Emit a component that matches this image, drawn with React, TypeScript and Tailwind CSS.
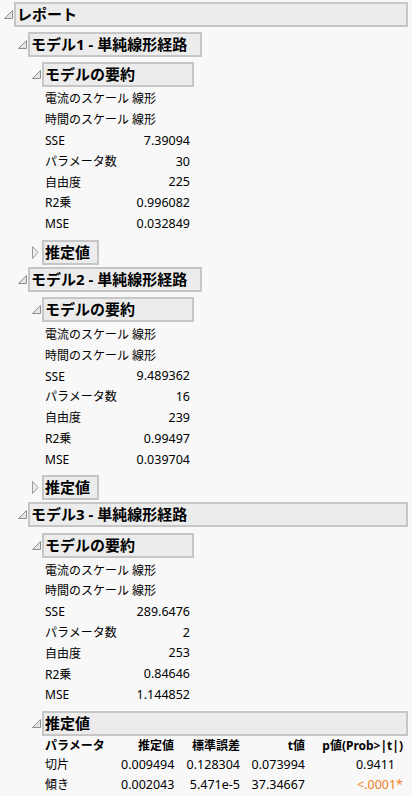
import React from "react";

const FONT = '"Noto Sans", "Noto Sans CJK JP", sans-serif';

function OpenTri() {
  return (
    <svg width="9" height="9" viewBox="0 0 9 9">
      <polygon points="8.5,0.5 8.5,8.5 0.5,8.5" fill="#e4e4e4" stroke="#8e8e8e" strokeWidth="1" />
    </svg>
  );
}

function ClosedTri() {
  return (
    <svg width="7" height="13" viewBox="0 0 7 13">
      <polygon points="0.5,0.5 6,6.5 0.5,12.5" fill="#ececec" stroke="#9a9a9a" strokeWidth="1" />
    </svg>
  );
}

function Header({
  title,
  open = true,
  width,
  className = "",
}: {
  title: string;
  open?: boolean;
  width: string;
  className?: string;
}) {
  return (
    <div className={"flex items-center " + className}>
      <div className={"w-[14px] h-[25px] flex items-center justify-end " + (open ? "pr-[1px] pt-[0px]" : "pr-[3px]")}>
        {open ? <OpenTri /> : <ClosedTri />}
      </div>
      <div
        className={
          "h-[25px] border-2 border-[#c6c6c6] bg-[#ececec] flex items-center pl-[1px] font-bold text-[15px] leading-none text-black whitespace-nowrap " +
          width
        }
      >
        {title}
      </div>
    </div>
  );
}

type Row = [string, string];

function Summary({ rows, className = "" }: { rows: Row[]; className?: string }) {
  return (
    <div className={"pl-[17px] " + className}>
      {rows.map(([k, v], i) => (
        <div key={i} className="flex items-center justify-between w-[145px] h-[20.8px] text-black">
          <span className="text-[12px] leading-none whitespace-nowrap">{k}</span>
          <span className="text-[12.5px] leading-none whitespace-nowrap">{v}</span>
        </div>
      ))}
    </div>
  );
}

function summaryRows(sse: string, p: string, df: string, r2: string, mse: string): Row[] {
  return [
    ["電流のスケール 線形", ""],
    ["時間のスケール 線形", ""],
    ["SSE", sse],
    ["パラメータ数", p],
    ["自由度", df],
    ["R2乗", r2],
    ["MSE", mse],
  ];
}

function EstTable() {
  return (
    <div className="pl-[17px] text-black">
      <div className="flex items-center h-[20px] font-bold text-[12px] leading-none whitespace-nowrap">
        <div className="w-[76px]">パラメータ</div>
        <div className="w-[53px] text-right">推定値</div>
        <div className="w-[66px] text-right">標準誤差</div>
        <div className="w-[65px] text-right">t値</div>
        <div className="w-[98px] text-right">p値(Prob&gt;|t|)</div>
      </div>
      <div className="flex items-center h-[19.5px] text-[12.5px] leading-none whitespace-nowrap">
        <div className="w-[76px] text-[12px]">切片</div>
        <div className="w-[53px] text-right">0.009494</div>
        <div className="w-[66px] text-right">0.128304</div>
        <div className="w-[65px] text-right">0.073994</div>
        <div className="w-[98px] text-right pr-[8px]">0.9411</div>
      </div>
      <div className="flex items-center h-[19.5px] text-[12.5px] leading-none whitespace-nowrap">
        <div className="w-[76px] text-[12px]">傾き</div>
        <div className="w-[53px] text-right">0.002043</div>
        <div className="w-[66px] text-right">5.471e-5</div>
        <div className="w-[65px] text-right">37.34667</div>
        <div className="w-[98px] text-right text-[#ee7f22]">&lt;.0001*</div>
      </div>
    </div>
  );
}

export default function App() {
  return (
    <div className="w-[412px] h-[796px] overflow-hidden bg-[#f8f8f8]" style={{ fontFamily: FONT }}>
      <div className="pt-[2px]">
        <Header title="レポート" width="w-[394px]" />
        <div className="pl-[14px]">
          {/* Model 1 */}
          <Header title="モデル1 - 単純線形経路" width="w-[174px]" className="mt-[5px]" />
          <div className="pl-[14px]">
            <Header title="モデルの要約" width="w-[152px]" className="mt-[5px]" />
            <Summary rows={summaryRows("7.39094", "30", "225", "0.996082", "0.032849")} className="mt-[2px]" />
            <Header title="推定値" open={false} width="w-[57px]" className="mt-[5px]" />
          </div>

          {/* Model 2 */}
          <Header title="モデル2 - 単純線形経路" width="w-[174px]" className="mt-[2px]" />
          <div className="pl-[14px]">
            <Header title="モデルの要約" width="w-[152px]" className="mt-[5px]" />
            <Summary rows={summaryRows("9.489362", "16", "239", "0.99497", "0.039704")} className="mt-[3px]" />
            <Header title="推定値" open={false} width="w-[57px]" className="mt-[5px]" />
          </div>

          {/* Model 3 */}
          <Header title="モデル3 - 単純線形経路" width="w-[380px]" className="mt-[2px]" />
          <div className="pl-[14px]">
            <Header title="モデルの要約" width="w-[152px]" className="mt-[6px]" />
            <Summary rows={summaryRows("289.6476", "2", "253", "0.84646", "1.144852")} className="mt-[2px]" />
            <Header title="推定値" width="w-[366px]" className="mt-[5px]" />
            <EstTable />
          </div>
        </div>
      </div>
    </div>
  );
}
